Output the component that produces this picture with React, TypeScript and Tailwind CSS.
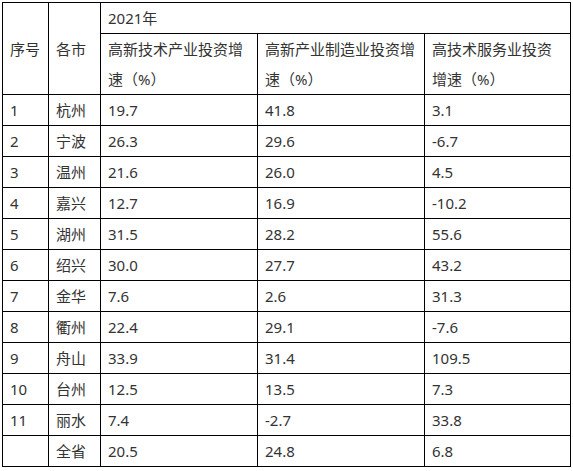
import React from "react";

const rows: [string, string, string, string, string][] = [
  ["1", "杭州", "19.7", "41.8", "3.1"],
  ["2", "宁波", "26.3", "29.6", "-6.7"],
  ["3", "温州", "21.6", "26.0", "4.5"],
  ["4", "嘉兴", "12.7", "16.9", "-10.2"],
  ["5", "湖州", "31.5", "28.2", "55.6"],
  ["6", "绍兴", "30.0", "27.7", "43.2"],
  ["7", "金华", "7.6", "2.6", "31.3"],
  ["8", "衢州", "22.4", "29.1", "-7.6"],
  ["9", "舟山", "33.9", "31.4", "109.5"],
  ["10", "台州", "12.5", "13.5", "7.3"],
  ["11", "丽水", "7.4", "-2.7", "33.8"],
  ["", "全省", "20.5", "24.8", "6.8"],
];

export default function App() {
  const td = "border border-black px-[7px] py-0 align-middle text-left font-normal";
  return (
    <div className="bg-white w-[573px] h-[471px] pt-[2px] pl-[2px]" style={{ fontFamily: '"Noto Sans", "Noto Sans CJK SC", sans-serif' }}>
      <table className="border-collapse table-fixed w-[568px] text-[15px] leading-[30px] text-[#333333]">
        <colgroup>
          <col className="w-[46px]" />
          <col className="w-[52px]" />
          <col className="w-[157px]" />
          <col className="w-[167px]" />
          <col className="w-[146px]" />
        </colgroup>
        <thead>
          <tr className="h-[31px]">
            <th rowSpan={2} className={td}>序号</th>
            <th rowSpan={2} className={td}>各市</th>
            <th colSpan={3} className={td}>2021年</th>
          </tr>
          <tr className="h-[61px]">
            <th className={td}>高新技术产业投资增速（%）</th>
            <th className={td}>高新产业制造业投资增速（%）</th>
            <th className={td}>高技术服务业投资增速（%）</th>
          </tr>
        </thead>
        <tbody>
          {rows.map((r, i) => (
            <tr key={i} className="h-[31px]">
              {r.map((c, j) => (
                <td key={j} className={td}>{c}</td>
              ))}
            </tr>
          ))}
        </tbody>
      </table>
    </div>
  );
}
